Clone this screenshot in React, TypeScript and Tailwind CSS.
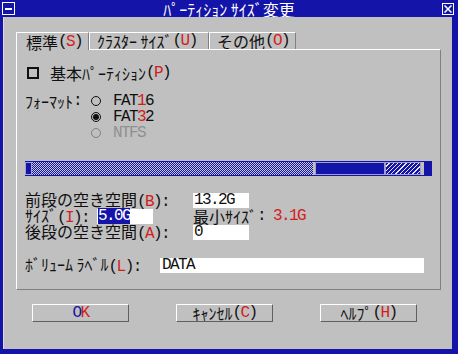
import type { ReactNode } from "react";

function M({ children, className = "" }: { children: ReactNode; className?: string }) {
  return (
    <span className={"font-['Liberation_Mono',monospace] text-[16px] leading-[16px] tracking-[-1.6px] " + className}>
      {children}
    </span>
  );
}

function Key({ k }: { k: string }) {
  return (
    <M>
      (<span className="text-[#d41c1c]">{k}</span>)
    </M>
  );
}

function Radio({ checked = false, disabled = false }: { checked?: boolean; disabled?: boolean }) {
  return (
    <div
      className={`w-[10px] h-[10px] rounded-full border flex items-center justify-center ${
        disabled ? "border-[#808080]" : "border-[#101010]"
      }`}
    >
      {checked && <div className="w-[6px] h-[6px] rounded-full bg-[#101010]" />}
    </div>
  );
}

function Field({ children, w = "w-[56px]" }: { children: ReactNode; w?: string }) {
  return <div className={`${w} h-[15px] bg-white flex items-center pl-[1px]`}>{children}</div>;
}

function Button({ children }: { children: ReactNode }) {
  return (
    <div className="w-[97px] h-[18px] border border-t-white border-l-white border-r-[#606060] border-b-[#606060] flex items-center justify-center">
      {children}
    </div>
  );
}

export default function App() {
  return (
    <div className="w-[458px] h-[354px] bg-[#1414a8] flex flex-col overflow-hidden font-['Noto_Sans_CJK_JP',sans-serif] text-[16px] leading-[16px] text-[#101010]">
      {/* Title bar */}
      <div className="h-[17px] grid grid-cols-[1fr_auto_1fr] items-start">
        <div className="pl-[2px] pt-[2px]">
          <div className="w-[13px] h-[13px] border border-white flex items-center justify-center">
            <div className="w-[7px] h-[2px] bg-white" />
          </div>
        </div>
        <div className="text-white leading-[16px] pt-[1px]">ﾊﾟｰﾃｨｼｮﾝ ｻｲｽﾞ変更</div>
        <div className="flex justify-end pr-[4px] pt-[3px]">
          <div className="w-[12px] h-[12px] border border-white flex items-center justify-center">
            <svg width="8" height="8" viewBox="0 0 8 8">
              <path d="M0.5 0.5 L7.5 7.5 M7.5 0.5 L0.5 7.5" stroke="white" strokeWidth="1.5" />
            </svg>
          </div>
        </div>
      </div>

      {/* Client area */}
      <div className="ml-[3px] w-[449px] h-[332px] bg-[#c0c0c0] border-l border-[#dcdcdc] flex flex-col pt-[15px] pl-[12px]">
        {/* Tabs */}
        <div className="flex items-end h-[17px]">
          <div className="relative z-10 -mb-px h-[18px] w-[73px] bg-[#c0c0c0] border-t border-l border-r border-t-white border-l-white border-r-[#808080] pl-[9px] flex items-center">
            標準<Key k="S" />
          </div>
          <div className="h-[17px] w-[120px] border-t border-l border-r border-t-white border-l-white border-r-[#808080] pl-[7px] flex items-center">
            ｸﾗｽﾀｰ ｻｲｽﾞ<Key k="U" />
          </div>
          <div className="h-[17px] w-[87px] border-t border-l border-r border-t-white border-l-white border-r-[#808080] pl-[7px] flex items-center">
            その他<Key k="O" />
          </div>
        </div>

        {/* Panel */}
        <div className="w-[425px] h-[241px] border border-t-white border-l-white border-r-[#808080] border-b-[#808080] flex flex-col pl-[8px] pt-[14px]">
          <div className="h-[17px] flex items-center">
            <div className="ml-[2px] w-[12px] h-[12px] border-2 border-[#101010]" />
            <span className="ml-[11px]">基本ﾊﾟｰﾃｨｼｮﾝ</span>
            <Key k="P" />
          </div>

          <div className="mt-[12px] flex">
            <div className="w-[66px] h-[16px] flex items-center">
              ﾌｫｰﾏｯﾄ<M>:</M>
            </div>
            <div className="flex flex-col">
              <div className="h-[16px] flex items-center gap-[12px]">
                <Radio />
                <M>
                  FAT<span className="text-[#d41c1c]">1</span>6
                </M>
              </div>
              <div className="h-[16px] flex items-center gap-[12px]">
                <Radio checked />
                <M>
                  FAT<span className="text-[#d41c1c]">3</span>2
                </M>
              </div>
              <div className="h-[16px] flex items-center gap-[12px]">
                <Radio disabled />
                <M className="text-[#909090]">NTFS</M>
              </div>
            </div>
          </div>

          {/* Partition bar */}
          <div className="mt-[20px] w-[407px] h-[15px] flex border-y border-[#1414a8]">
            <div className="w-[7px] bg-[#1414a8] border border-[#a0a0c8]" />
            <div className="w-[281px] bg-[repeating-conic-gradient(#1414a8_0_25%,#c8c8d8_0_50%)] bg-size-[2px_2px]" />
            <div className="w-[2px] bg-[#c0c0c0]" />
            <div className="w-[70px] bg-[#1414a8] border border-[#a0a0c8]" />
            <div className="w-[36px] border border-[#a0a0c8] bg-[repeating-linear-gradient(135deg,#1414a8_0_2px,#e8e8f4_2px_3px)]" />
            <div className="w-[3px] bg-[#c0c0c0]" />
            <div className="w-[8px] bg-[#1414a8]" />
          </div>

          {/* Sizes */}
          <div className="mt-[16px] flex flex-col">
            <div className="h-[16px] flex items-center">
              <div className="w-[168px] shrink-0">
                前段の空き空間<Key k="B" />
                <M>:</M>
              </div>
              <Field>
                <M>13.2G</M>
              </Field>
            </div>
            <div className="h-[16px] flex items-center">
              <div className="w-[72px] shrink-0">
                ｻｲｽﾞ<Key k="I" />
                <M>:</M>
              </div>
              <Field>
                <M className="bg-[#1414a8] text-white">5.0G</M>
              </Field>
              <div className="w-[40px]" />
              <span>最小ｻｲｽﾞ</span>
              <M>:</M>
              <M className="ml-[8px] text-[#d41c1c]">3.1G</M>
            </div>
            <div className="h-[16px] flex items-center">
              <div className="w-[168px] shrink-0">
                後段の空き空間<Key k="A" />
                <M>:</M>
              </div>
              <Field>
                <M>0</M>
              </Field>
            </div>
          </div>

          <div className="mt-[17px] h-[16px] flex items-center">
            <div className="w-[135px] shrink-0">
              ﾎﾞﾘｭｰﾑ ﾗﾍﾞﾙ<Key k="L" />
              <M>:</M>
            </div>
            <Field w="w-[264px]">
              <M className="ml-[1px]">DATA</M>
            </Field>
          </div>
        </div>

        {/* Buttons */}
        <div className="mt-[14px] ml-[16px] flex gap-[47px]">
          <Button>
            <M>
              <span className="text-[#1414a8]">O</span>
              <span className="text-[#d41c1c]">K</span>
            </M>
          </Button>
          <Button>
            ｷｬﾝｾﾙ<Key k="C" />
          </Button>
          <Button>
            ﾍﾙﾌﾟ<Key k="H" />
          </Button>
        </div>
      </div>
    </div>
  );
}
